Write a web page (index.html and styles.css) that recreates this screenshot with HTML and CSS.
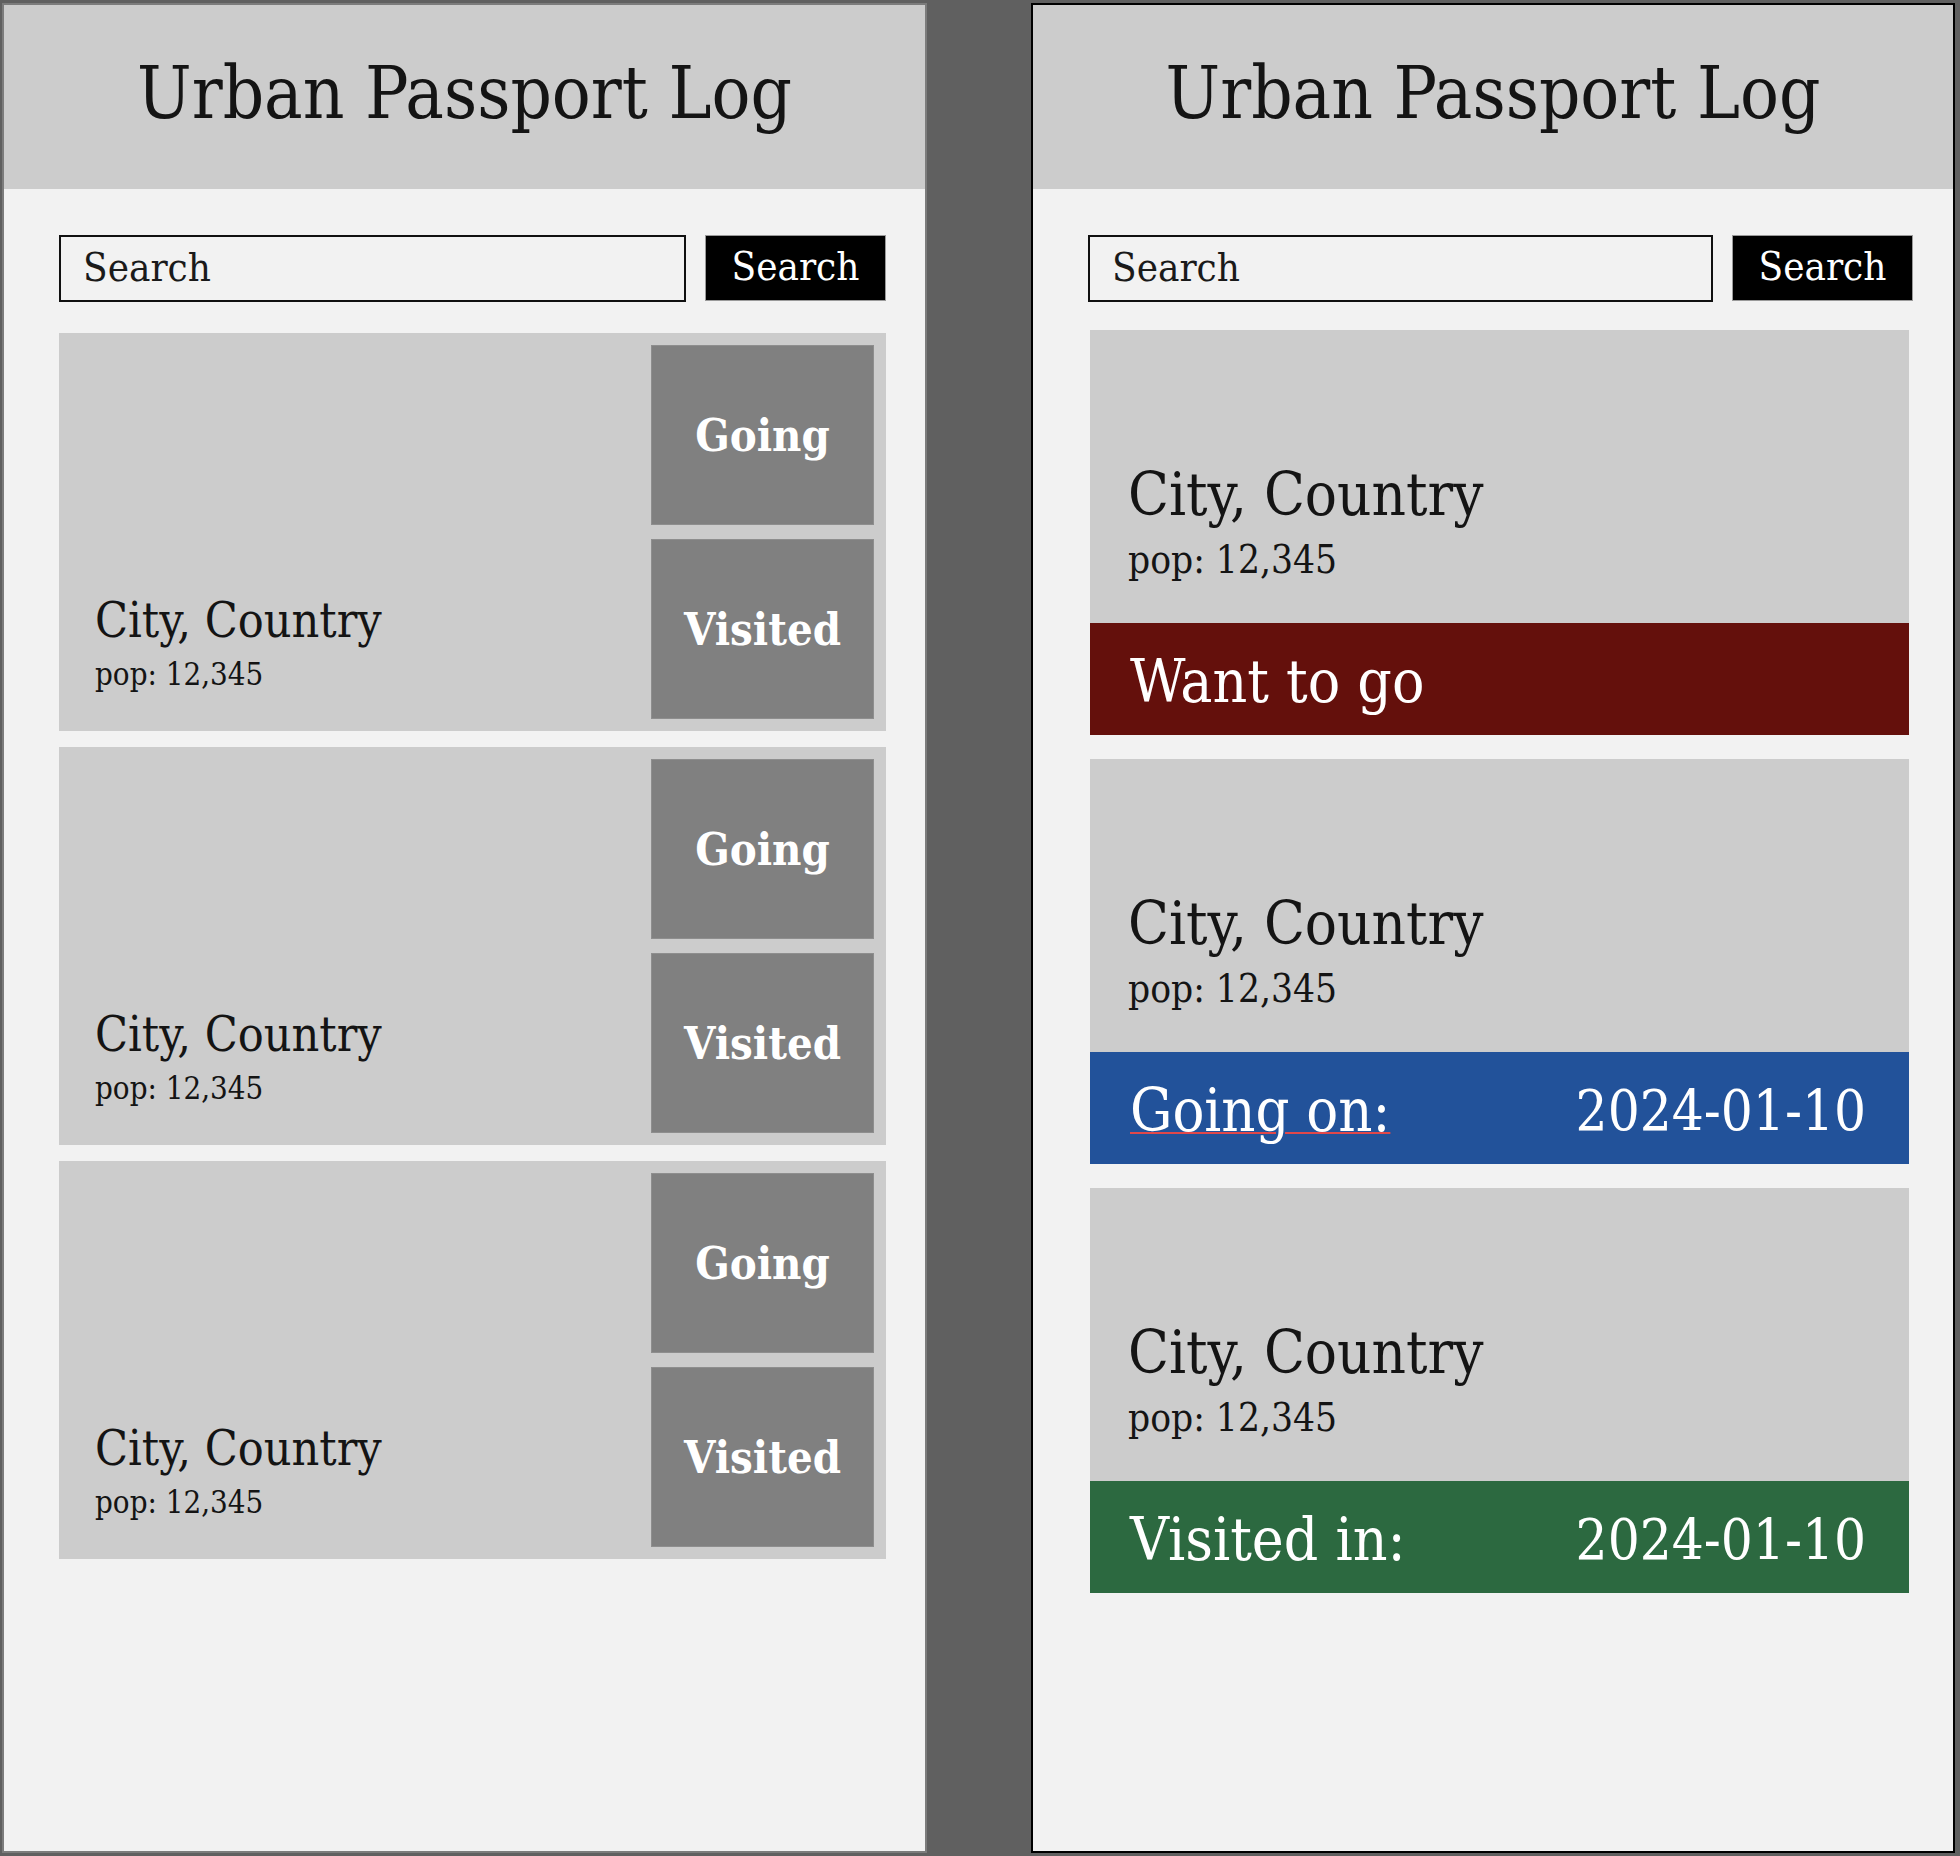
FILE: index.html
```html
<!DOCTYPE html>
<html lang="en">
<head>
<meta charset="utf-8">
<title>Urban Passport Log</title>
<link rel="stylesheet" href="styles.css">
</head>
<body>
<div class="desk">
  <section class="panel panel-list">
    <header class="header"><h1 class="title">Urban Passport Log</h1></header>
    <div class="content">
      <form class="search">
        <input class="search-input" type="text" placeholder="Search">
        <button class="search-btn" type="button">Search</button>
      </form>
      <div class="cards cards-list">
        <article class="card">
          <div class="info">
            <div class="city">City, Country</div>
            <div class="pop">pop: 12,345</div>
          </div>
          <div class="actions">
            <button class="act" type="button">Going</button>
            <button class="act" type="button">Visited</button>
          </div>
        </article>
        <article class="card">
          <div class="info">
            <div class="city">City, Country</div>
            <div class="pop">pop: 12,345</div>
          </div>
          <div class="actions">
            <button class="act" type="button">Going</button>
            <button class="act" type="button">Visited</button>
          </div>
        </article>
        <article class="card">
          <div class="info">
            <div class="city">City, Country</div>
            <div class="pop">pop: 12,345</div>
          </div>
          <div class="actions">
            <button class="act" type="button">Going</button>
            <button class="act" type="button">Visited</button>
          </div>
        </article>
      </div>
    </div>
  </section>

  <section class="panel panel-detail">
    <header class="header"><h1 class="title">Urban Passport Log</h1></header>
    <div class="content">
      <form class="search">
        <input class="search-input" type="text" placeholder="Search">
        <button class="search-btn" type="button">Search</button>
      </form>
      <div class="cards cards-detail">
        <article class="dcard">
          <div class="summary">
            <div class="city city-lg">City, Country</div>
            <div class="pop pop-lg">pop: 12,345</div>
          </div>
          <div class="band band-want"><span class="label">Want to go</span></div>
        </article>
        <article class="dcard">
          <div class="summary">
            <div class="city city-lg">City, Country</div>
            <div class="pop pop-lg">pop: 12,345</div>
          </div>
          <div class="band band-going"><span class="label marked">Going on:</span><span class="date">2024-01-10</span></div>
        </article>
        <article class="dcard">
          <div class="summary">
            <div class="city city-lg">City, Country</div>
            <div class="pop pop-lg">pop: 12,345</div>
          </div>
          <div class="band band-visited"><span class="label">Visited in:</span><span class="date">2024-01-10</span></div>
        </article>
      </div>
    </div>
  </section>
</div>
</body>
</html>
```

FILE: styles.css
```css
* { box-sizing: border-box; }

html, body {
  margin: 0;
  padding: 0;
}

body {
  background: #606060;
  font-family: "DejaVu Serif Condensed", "DejaVu Serif", serif;
  font-stretch: condensed;
  color: #111;
}

.desk {
  display: flex;
  justify-content: space-between;
  padding: 3px 5px 3px 2px;
  height: 1856px;
}

.panel {
  width: 925px;
  height: 1850px;
  background: #f2f2f2;
  display: flex;
  flex-direction: column;
}

.panel-list { border: 2px solid #7c7c7c; }

.panel-detail {
  width: 924px;
  border: 2px solid #000;
}

.header {
  height: 184px;
  flex: none;
  background: #cccccc;
  display: flex;
  align-items: center;
  justify-content: center;
  padding-bottom: 6px;
}

.title {
  margin: 0;
  font-weight: normal;
  font-size: 72px;
  line-height: 1.164;
  color: #141414;
}

.content {
  padding: 46px 39px 0 55px;
}

.panel-detail .content { padding-right: 40px; }

.search {
  display: flex;
  gap: 19px;
  height: 67px;
  margin: 0;
}

.search-input {
  flex: 1;
  min-width: 0;
  height: 67px;
  border: 2px solid #111;
  background: #f2f2f2;
  padding: 0 0 4px 22px;
  font: inherit;
  font-size: 40px;
  color: #111;
  outline: none;
}

.search-input::placeholder { color: #1a1a1a; opacity: 1; }

.search-btn {
  width: 181px;
  height: 66px;
  background: #000;
  border: 1px solid #9a9a9a;
  color: #fff;
  font: inherit;
  font-size: 40px;
  padding: 0 0 4px;
}

.cards {
  display: flex;
  flex-direction: column;
}

.cards-list {
  margin-top: 31px;
  gap: 16px;
}

.cards-detail {
  margin: 28px 4px 0 2px;
  gap: 24px;
}

/* left: list cards */
.card {
  height: 398px;
  display: flex;
  background: #cccccc;
}

.info {
  flex: 1;
  display: flex;
  flex-direction: column;
  justify-content: flex-end;
  padding: 0 0 38px 36px;
}

.city {
  font-size: 48px;
  line-height: 1.2;
  color: #141414;
}

.pop {
  font-size: 31px;
  line-height: 1.2;
  margin-top: 6px;
  color: #141414;
}

.actions {
  width: 235px;
  padding: 12px 12px 12px 0;
  display: flex;
  flex-direction: column;
  gap: 14px;
}

.act {
  flex: 1;
  background: #808080;
  border: 1px solid #8e8e8e;
  color: #fff;
  font: inherit;
  font-weight: bold;
  font-size: 45px;
  padding: 0;
}

/* right: detail cards */
.dcard {
  height: 405px;
  display: flex;
  flex-direction: column;
  background: #cccccc;
}

.summary {
  height: 293px;
  display: flex;
  flex-direction: column;
  justify-content: flex-end;
  padding: 0 0 40px 38px;
}

.city-lg { font-size: 59.5px; }

.pop-lg {
  font-size: 38.5px;
  margin-top: 6px;
}

.band {
  height: 112px;
  display: flex;
  align-items: center;
  justify-content: space-between;
  padding: 4px 43px 0 40px;
  color: #fff;
}

.label { font-size: 60px; }
.date { font-size: 56px; }

.band-want { background: #64100c; }
.band-going { background: #22529a; }
.band-visited { background: #2c6940; }

.marked {
  font-size: 59px;
  text-decoration: underline;
  text-decoration-color: #e0484a;
  text-decoration-thickness: 2px;
  text-underline-offset: 1px;
}
```
